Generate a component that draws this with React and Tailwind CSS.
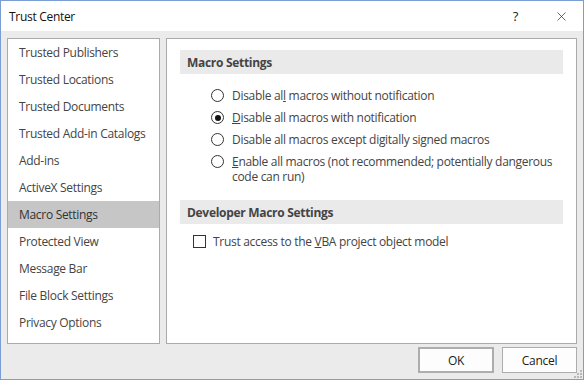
import { X } from 'lucide-react';

const categories = [
  'Trusted Publishers',
  'Trusted Locations',
  'Trusted Documents',
  'Trusted Add-in Catalogs',
  'Add-ins',
  'ActiveX Settings',
  'Macro Settings',
  'Protected View',
  'Message Bar',
  'File Block Settings',
  'Privacy Options',
];

function Radio({ checked, children }) {
  return (
    <div className="flex items-start">
      <span className="mt-px flex h-[13px] w-[13px] shrink-0 items-center justify-center rounded-full border border-[#333] bg-white">
        {checked && <span className="h-[6px] w-[6px] rounded-full bg-[#111]" />}
      </span>
      <span className="ml-[8px] w-[330px]">{children}</span>
    </div>
  );
}

function Heading({ children }) {
  return (
    <div className="flex h-[24px] items-center bg-[#eaeaea] pl-[7px] font-bold text-[#444]">
      {children}
    </div>
  );
}

export default function App() {
  return (
    <div
      className="relative flex h-[380px] w-[584px] flex-col border border-[#7a9dd4] text-[12px] leading-[15px] tracking-[-0.3px] text-[#333]"
      style={{ fontFamily: '"Open Sans", "Liberation Sans", sans-serif' }}
    >
      <div className="flex h-[30px] items-center bg-white pl-[8px] text-[#111]">
        <span className="flex-1">Trust Center</span>
        <span className="mr-[36px] text-[13px] text-[#222]">?</span>
        <X className="mr-[14px] h-[15px] w-[15px] text-[#222]" strokeWidth={1.1} />
      </div>

      <div className="flex flex-1 flex-col bg-[#ebebeb] px-[6px] pt-[7px] pb-[6px]">
        <div className="flex h-[306px] gap-[6px]">
          <ul className="w-[153px] border border-[#ababab] bg-white">
            {categories.map((c) => (
              <li
                key={c}
                className={
                  c === 'Macro Settings'
                    ? 'flex h-[27px] items-center bg-[#c6c6c6] pl-[11px] text-[#333]'
                    : 'flex h-[27px] items-center pl-[11px] text-[#444]'
                }
              >
                {c}
              </li>
            ))}
          </ul>

          <div className="flex-1 border border-[#ababab] bg-white px-[13px] pt-[11px]">
            <Heading>Macro Settings</Heading>
            <div className="mt-[14px] flex flex-col gap-[7px] pl-[31px] text-[#444]">
              <Radio>
                Disable al<u>l</u> macros without notification
              </Radio>
              <Radio checked>
                <u>D</u>isable all macros with notification
              </Radio>
              <Radio>Disable all macros except digitally signed macros</Radio>
              <Radio>
                <u>E</u>nable all macros (not recommended; potentially dangerous code can run)
              </Radio>
            </div>

            <div className="mt-[16px]">
              <Heading>Developer Macro Settings</Heading>
            </div>
            <div className="mt-[10px] flex items-center pl-[13px] text-[#444]">
              <span className="h-[13px] w-[13px] border border-[#333] bg-white" />
              <span className="ml-[7px]">
                Trust access to the <u>V</u>BA project object model
              </span>
            </div>
          </div>
        </div>

        <div className="mt-[3px] flex justify-end gap-[8px]">
          <button
            type="button"
            className="h-[26px] w-[76px] border-2 border-[#adadad] bg-[#fdfdfd] text-[#222]"
          >
            OK
          </button>
          <button
            type="button"
            className="h-[26px] w-[75px] border border-[#adadad] bg-[#fdfdfd] text-[#222]"
          >
            Cancel
          </button>
        </div>
      </div>

      <svg className="absolute right-[1px] bottom-[1px]" width="8" height="8" viewBox="0 0 8 8">
        <g fill="#b8b8b8">
          <rect x="6" y="0" width="2" height="2" />
          <rect x="3" y="3" width="2" height="2" />
          <rect x="6" y="3" width="2" height="2" />
          <rect x="0" y="6" width="2" height="2" />
          <rect x="3" y="6" width="2" height="2" />
          <rect x="6" y="6" width="2" height="2" />
        </g>
      </svg>
    </div>
  );
}
